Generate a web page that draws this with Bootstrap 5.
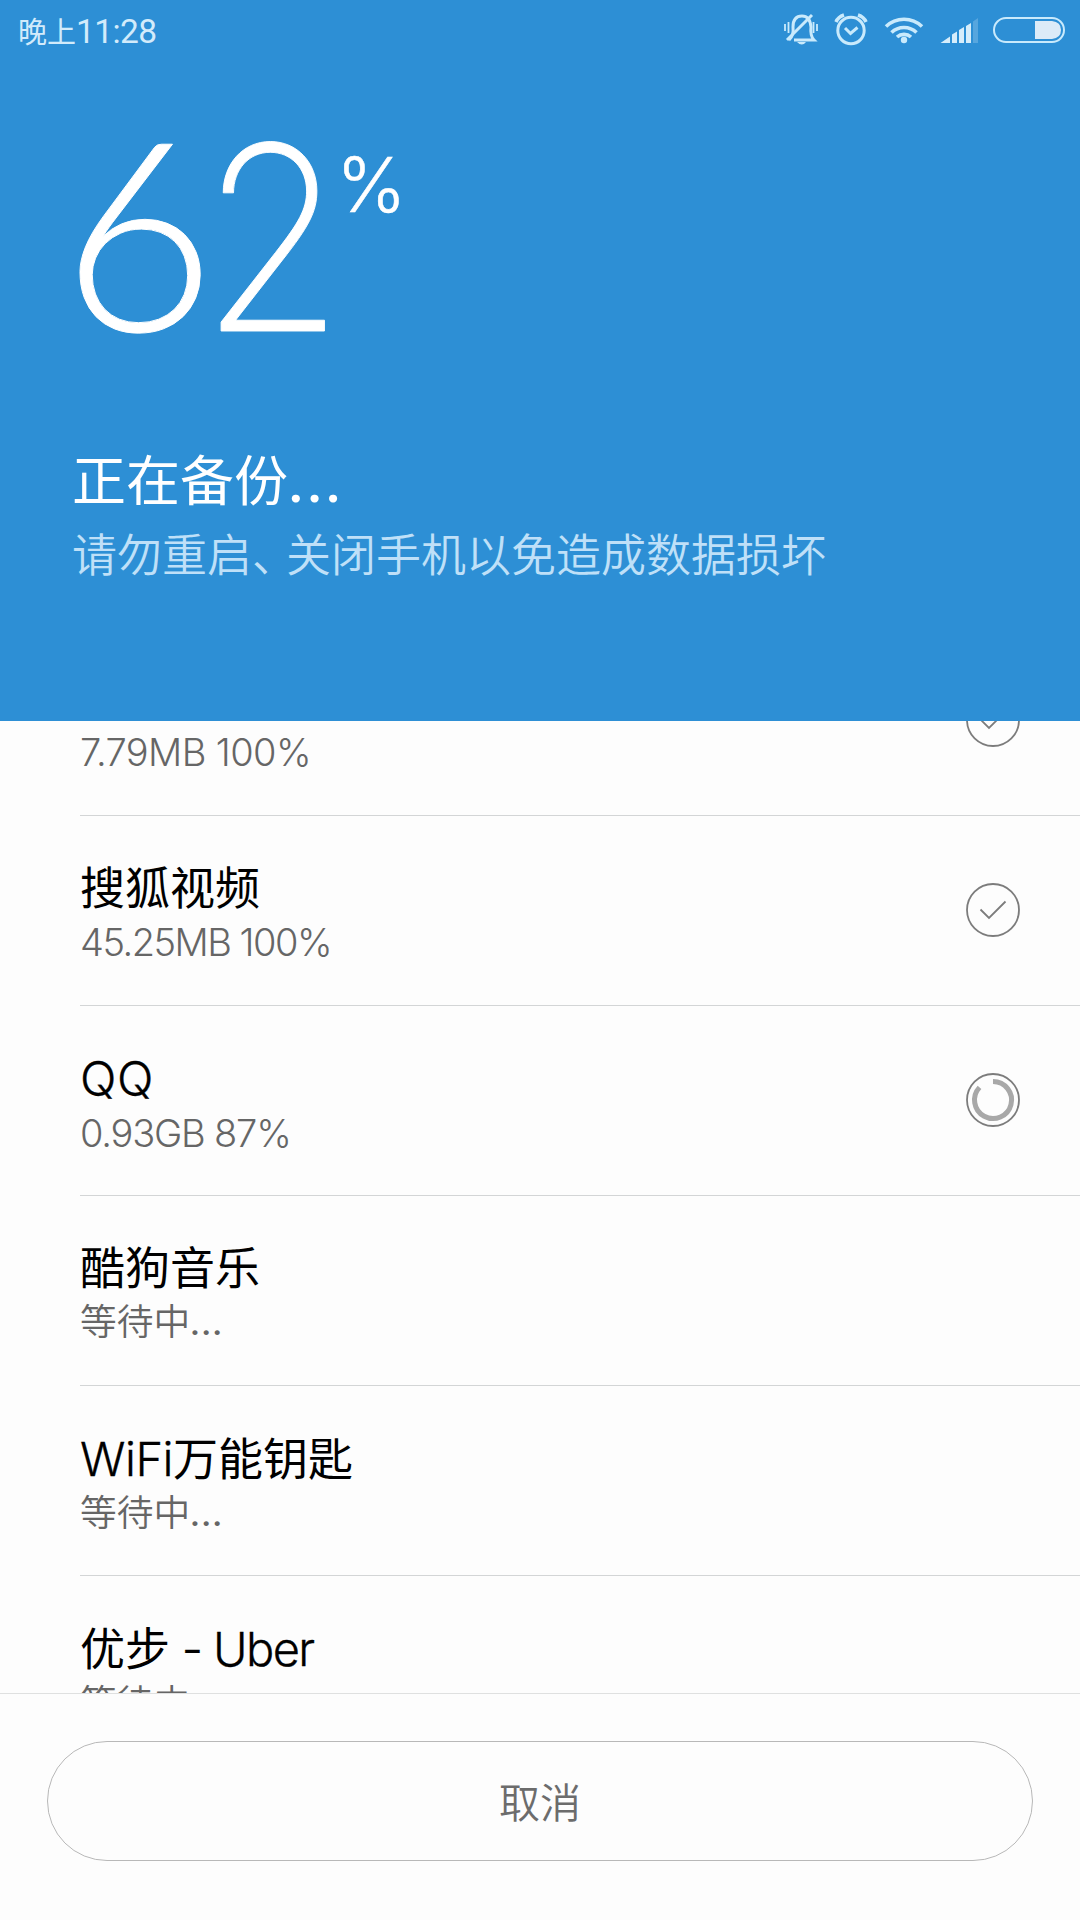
<!DOCTYPE html>
<html lang="zh-CN">
<head>
<meta charset="utf-8">
<meta name="viewport" content="width=device-width, initial-scale=1">
<title>备份</title>
<link rel="stylesheet" href="https://cdn.jsdelivr.net/npm/bootstrap@5.3.0/dist/css/bootstrap.min.css">
<style>
body { font-family: Roboto, "Noto Sans CJK SC", sans-serif; background: #fdfdfd; color: #000; }
.screen { width: 1080px; height: 1920px; }
.hero { height: 721px; background: #2d8fd5; color: #fff; }
.statusbar { height: 62px; padding: 1px 0 0 18px; color: #d2ebfb; font-size: 29px; line-height: 62px; }
.statusbar svg { margin-top: -1px; }
.statusbar .clock { font-size: 33.5px; letter-spacing: -.6px; }
.percent { padding: 36px 0 0 62px; height: 366px; }
.percent .num { font-family: Lato, sans-serif; font-weight: 300; font-size: 264px; line-height: 262px; letter-spacing: -14px; -webkit-text-stroke: 1px #fff; }
.percent .narrow { display: inline-block; width: 135px; font-family: Inter, sans-serif; font-weight: 200; font-size: 257px; letter-spacing: 0; transform: scaleX(.9); transform-origin: 0 0; }
.percent .unit { font-family: Inter, sans-serif; font-size: 75px; line-height: 174px; font-weight: 300; -webkit-text-stroke: .5px #fff; }
.state { padding-left: 72px; font-family: "Noto Sans CJK SC", sans-serif; font-size: 54px; line-height: 100px; font-weight: 400; }
.state .dots { font-family: Roboto, sans-serif; letter-spacing: 4.4px; -webkit-text-stroke: 2px #fff; padding-left: 1px; }
.warn { margin-top: -5px; padding: 0 0 0 72px; font-family: "Noto Sans CJK SC", sans-serif; font-size: 45px; line-height: 50px; color: #bfe0f8; font-weight: 350; }
.comma { letter-spacing: -11px; }
.list-area { height: 972px; }
.tasks { margin-top: -95px; padding-left: 80px; }
.task { height: 190px; padding-right: 60px; border-bottom: 1px solid #d3d5d6; }
.task svg { margin-top: -1px; }
.task-text { padding-top: 11px; }
.name { font-size: 45px; line-height: 53px; font-weight: 400; }
.name .lat { font-family: Inter, sans-serif; font-size: 47px; font-weight: 350; letter-spacing: -.5px; -webkit-text-stroke: .3px #000; }
.name .lat-wide { font-size: 48px; letter-spacing: .6px; }
.name .lat-tight { letter-spacing: -1.6px; }
.name .dash { display: inline-block; width: 43px; text-align: center; white-space: pre; }
.info { font-size: 36.7px; line-height: 53px; color: #666; font-weight: 350; }
.info .lat { font-family: Inter, sans-serif; font-size: 38px; font-weight: 300; letter-spacing: -1.5px; }
.info .lat-wide { letter-spacing: -.6px; }
.info .lat-mid { letter-spacing: -1.2px; }
.info .dots { letter-spacing: .9px; font-weight: 500; }
.footer-bar { height: 227px; border-top: 1px solid #dfe0e0; padding: 47px 47px 0; }
.cancel { height: 120px; border: 1px solid #b8b8b8; color: #6c6c6c; font-size: 41px; font-weight: 350; background: transparent; }
</style>
</head>
<body>
<div class="screen d-flex flex-column overflow-hidden">
  <header class="hero flex-shrink-0">
    <div class="statusbar d-flex justify-content-between">
      <div>晚上<span class="clock">11:28</span></div>
      <svg width="300" height="62" viewBox="780 0 300 62" fill="none" stroke="#c9eafc" stroke-width="3">
        <g>
          <path d="M789 40Q794 36 793 27Q793 16 802 16Q810 16 811 27Q810 36 814 40H794" stroke-width="3"/>
          <path d="M812 15L787 40" stroke-width="3"/>
          <path d="M797 42H806Q802 47 797 42Z" fill="#c9eafc" stroke="none"/>
          <path d="M785 24v7M788.500 22v11M813.500 22v11M817 24v7" stroke-width="1.800"/>
        </g>
        <circle cx="851" cy="30.500" r="13.200"/>
        <path d="M845 28l5.500 5.500 7-6"/>
        <path d="M836 22Q838 17 844 15M858 15Q864 17 866 22" stroke-width="3.500"/>
        <path d="M886 26.500A26 26 0 0 1 922 26.500M891.500 32.500A18 18 0 0 1 916.500 32.500M897 37A10.500 10.500 0 0 1 911 37" stroke-width="3.600"/>
        <circle cx="904" cy="40" r="3.200" fill="#c9eafc" stroke="none"/>
        <g stroke="none" fill="#d6edfb">
          <path d="M940.500 43L950 36.500V43ZM952 43V34.500L957 31.500V43ZM959 43V30L964 27V43ZM966 43V26L971 23V43Z"/>
          <path d="M973 43V21.500L978 18V43Z" opacity=".25"/>
        </g>
        <rect x="994" y="18" width="70" height="24" rx="12" stroke-width="2"/>
        <path d="M1035 21H1052Q1061 22 1061 30T1052 39H1035Z" fill="#dcebf8" stroke="none"/>
      </svg>
    </div>
    <div class="percent d-flex align-items-start"><span class="num">6<span class="narrow">2</span></span><span class="unit">%</span></div>
    <div class="state">正在备份<span class="dots">...</span></div>
    <div class="warn">请勿重启<span class="comma">、</span>关闭手机以免造成数据损坏</div>
  </header>

  <main class="list-area flex-shrink-0 overflow-hidden">
    <div class="tasks">
      <div class="task d-flex align-items-center justify-content-between">
        <div class="task-text"><div class="name">&nbsp;</div><div class="info"><span class="lat lat-wide">7.79MB 100%</span></div></div>
        <svg width="54" height="54" fill="none" stroke="#7c7c7c" stroke-width="1.800"><circle cx="27" cy="27" r="26"/><path d="M14.500 26.500l8.500 8.500L39.500 18.500"/></svg>
      </div>
      <div class="task d-flex align-items-center justify-content-between">
        <div class="task-text"><div class="name">搜狐视频</div><div class="info"><span class="lat">45.25MB 100%</span></div></div>
        <svg width="54" height="54" fill="none" stroke="#7c7c7c" stroke-width="1.800"><circle cx="27" cy="27" r="26"/><path d="M14.500 26.500l8.500 8.500L39.500 18.500"/></svg>
      </div>
      <div class="task d-flex align-items-center justify-content-between">
        <div class="task-text"><div class="name"><span class="lat lat-wide">QQ</span></div><div class="info"><span class="lat lat-mid">0.93GB 87%</span></div></div>
        <svg width="54" height="54" fill="none" stroke="#7c7c7c" stroke-width="1.800"><circle cx="27" cy="27" r="26"/><path d="M27 8.500A18.500 18.500 0 1 1 13.500 14.400" stroke="#a8a8a8" stroke-width="5"/></svg>
      </div>
      <div class="task d-flex align-items-center">
        <div class="task-text"><div class="name">酷狗音乐</div><div class="info">等待中<span class="dots">...</span></div></div>
      </div>
      <div class="task d-flex align-items-center">
        <div class="task-text"><div class="name"><span class="lat">WiFi</span>万能钥匙</div><div class="info">等待中<span class="dots">...</span></div></div>
      </div>
      <div class="task d-flex align-items-center">
        <div class="task-text"><div class="name">优步<span class="lat lat-tight"><span class="dash"> - </span>Uber</span></div><div class="info">等待中<span class="dots">...</span></div></div>
      </div>
    </div>
  </main>

  <footer class="footer-bar flex-shrink-0">
    <button type="button" class="cancel btn rounded-pill w-100 p-0 pt-2">取消</button>
  </footer>
</div>
<script src="https://cdn.jsdelivr.net/npm/bootstrap@5.3.0/dist/js/bootstrap.bundle.min.js"></script>
</body>
</html>
